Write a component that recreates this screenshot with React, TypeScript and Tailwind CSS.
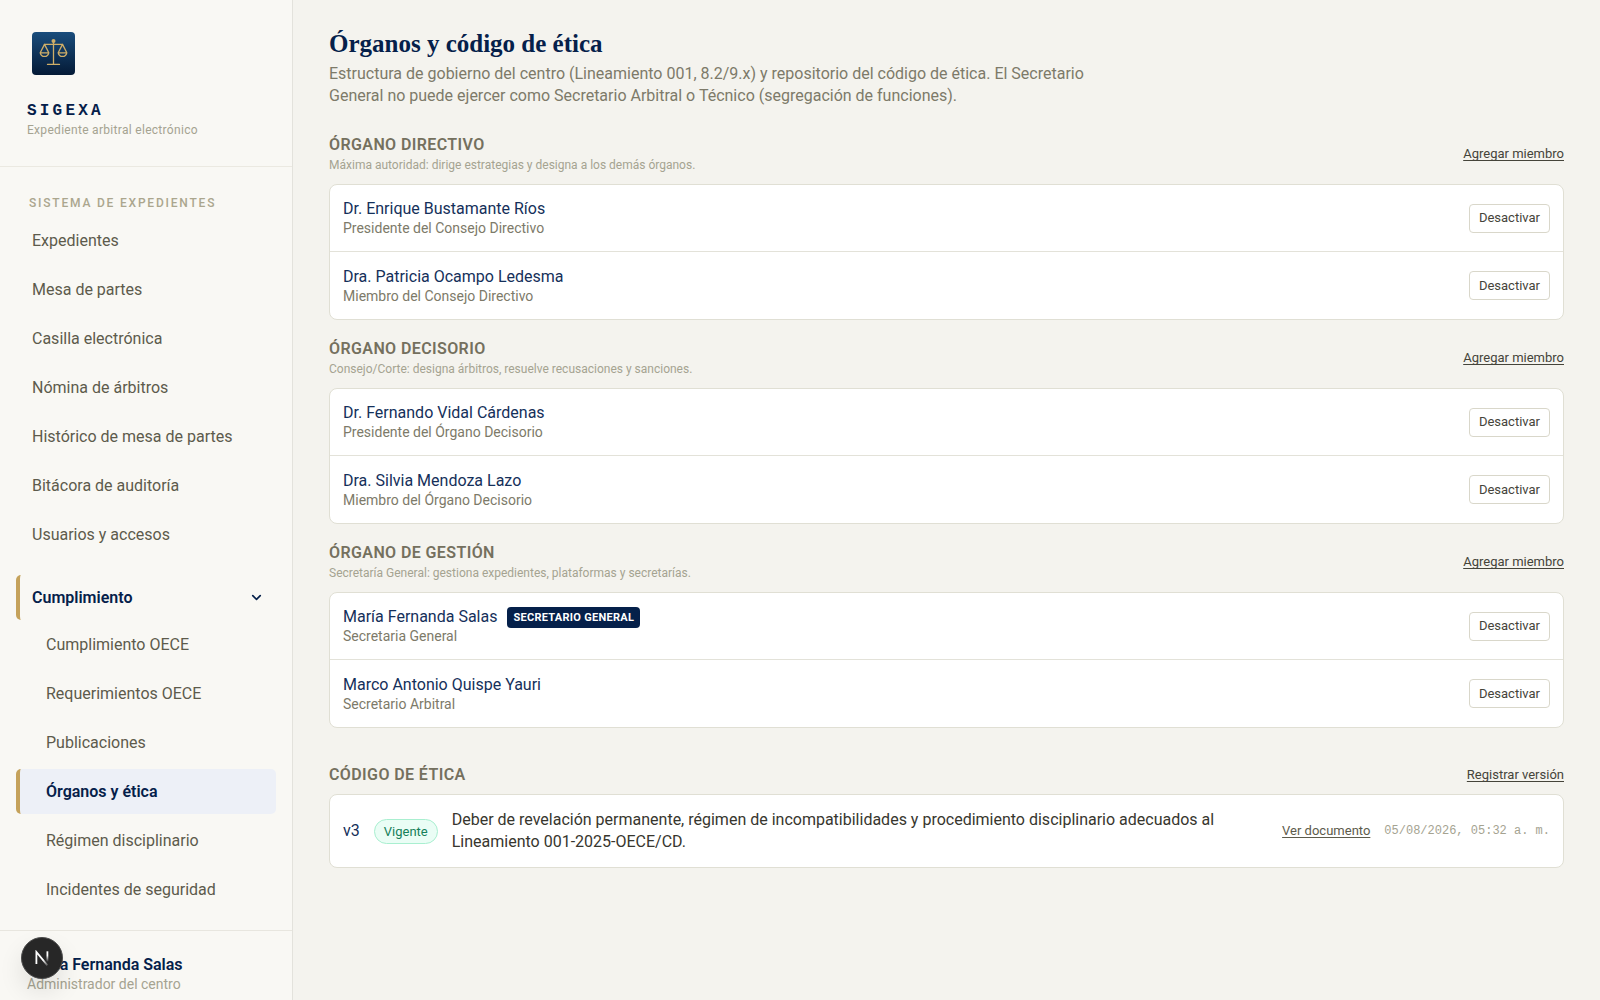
import { ChevronDown } from "lucide-react";

type Member = { name: string; role: string; badge?: string };
type Organ = { title: string; note: string; members: Member[] };

const navItems = [
  "Expedientes",
  "Mesa de partes",
  "Casilla electrónica",
  "Nómina de árbitros",
  "Histórico de mesa de partes",
  "Bitácora de auditoría",
  "Usuarios y accesos",
];

const complianceItems = [
  "Cumplimiento OECE",
  "Requerimientos OECE",
  "Publicaciones",
  "Órganos y ética",
  "Régimen disciplinario",
  "Incidentes de seguridad",
];

const organs: Organ[] = [
  {
    title: "Órgano Directivo",
    note: "Máxima autoridad: dirige estrategias y designa a los demás órganos.",
    members: [
      { name: "Dr. Enrique Bustamante Ríos", role: "Presidente del Consejo Directivo" },
      { name: "Dra. Patricia Ocampo Ledesma", role: "Miembro del Consejo Directivo" },
    ],
  },
  {
    title: "Órgano Decisorio",
    note: "Consejo/Corte: designa árbitros, resuelve recusaciones y sanciones.",
    members: [
      { name: "Dr. Fernando Vidal Cárdenas", role: "Presidente del Órgano Decisorio" },
      { name: "Dra. Silvia Mendoza Lazo", role: "Miembro del Órgano Decisorio" },
    ],
  },
  {
    title: "Órgano de Gestión",
    note: "Secretaría General: gestiona expedientes, plataformas y secretarías.",
    members: [
      { name: "María Fernanda Salas", role: "Secretaria General", badge: "Secretario General" },
      { name: "Marco Antonio Quispe Yauri", role: "Secretario Arbitral" },
    ],
  },
];

function Logo() {
  return (
    <svg viewBox="0 0 43 43" className="ml-[5px] size-[43px]" role="img" aria-label="SIGEXA">
      <defs>
        <linearGradient id="logo-bg" x1="0" y1="0" x2="0" y2="1">
          <stop offset="0" stopColor="#1a4d7c" />
          <stop offset="1" stopColor="#041a36" />
        </linearGradient>
      </defs>
      <rect width="43" height="43" rx="4" fill="url(#logo-bg)" />
      <g fill="none" stroke="#cfae68" strokeWidth="1.3" strokeLinecap="round" strokeLinejoin="round">
        <path d="M21.5 10v22M15.5 32.4h12M12.5 12.4h18" />
        <path d="M12.5 12.4 8.2 20.8h8.6zM8.2 20.8a4.4 4.6 0 0 0 8.6 0" />
        <path d="M30.5 12.4l-4.3 8.4h8.6zM26.2 20.8a4.4 4.6 0 0 0 8.6 0" />
      </g>
      <circle cx="21.5" cy="9" r="2" fill="#cfae68" />
    </svg>
  );
}

function Sidebar() {
  const item = "flex h-[45px] items-center rounded-[5px] border-l-4 text-[16px]";
  return (
    <aside className="sticky top-0 flex h-screen w-[293px] shrink-0 flex-col overflow-hidden border-r border-[#e3e2dc] bg-[#f9f8f4]">
      <header className="border-b border-[#ebe9e1] px-[27px] pt-8 pb-[26px]">
        <Logo />
        <p className="mt-[26px] font-['Liberation_Mono',monospace] text-[16px] leading-5 font-bold tracking-[0.2em] text-[#05204a]">SIGEXA</p>
        <p className="text-[12px] leading-[19px] tracking-wide text-[#a5a391]">Expediente arbitral electrónico</p>
      </header>
      <nav className="px-4 pt-[26px]">
        <h2 className="pl-[13px] text-[12px] leading-5 font-medium tracking-[0.15em] text-[#aba68e] uppercase">Sistema de expedientes</h2>
        <ul className="mt-[5px] flex flex-col gap-1">
          {navItems.map((label) => (
            <li key={label}>
              <a href="#" className={`${item} border-transparent pl-3 text-[#5d5b4c]`}>{label}</a>
            </li>
          ))}
        </ul>
        <button type="button" aria-expanded="true" className={`${item} mt-[18px] w-full justify-between border-[#c5a25b] pr-3 pl-3 font-semibold text-[#05204a]`}>
          Cumplimiento
          <ChevronDown size={15} strokeWidth={2.6} />
        </button>
        <ul className="mt-[2px] flex flex-col gap-1">
          {complianceItems.map((label) => (
            <li key={label}>
              <a
                href="#"
                aria-current={label === "Órganos y ética" ? "page" : undefined}
                className={`${item} pl-[26px] ${label === "Órganos y ética" ? "border-[#c5a25b] bg-[#edf0f7] font-semibold text-[#05204a]" : "border-transparent text-[#5d5b4c]"}`}
              >
                {label}
              </a>
            </li>
          ))}
        </ul>
      </nav>
      <footer className="mt-[18px] shrink-0 border-t border-[#e8e6df] px-[27px] pt-6">
        <p className="text-[16px] leading-5 font-semibold text-[#05204a]">María Fernanda Salas</p>
        <p className="text-[14px] leading-[18px] text-[#a5a391]">Administrador del centro</p>
      </footer>
    </aside>
  );
}

function OrganSection({ organ }: { organ: Organ }) {
  return (
    <section>
      <div className="mb-2.5 flex items-center justify-between">
        <div>
          <h2 className="text-[16px] leading-[22px] font-semibold tracking-wide text-[#74705e] uppercase">{organ.title}</h2>
          <p className="text-[12px] leading-[18px] text-[#a5a391]">{organ.note}</p>
        </div>
        <button type="button" className="text-[13px] text-[#45443a] underline underline-offset-2">Agregar miembro</button>
      </div>
      <ul className="divide-y divide-[#e3e2d9] rounded-lg border border-[#e0dfd4] bg-white">
        {organ.members.map((m) => (
          <li key={m.name} className="flex min-h-[67px] items-center justify-between px-[13px]">
            <div>
              <div className="flex h-5 items-center gap-2.5 text-[16px] leading-5 text-[#15305a]">
                {m.name}
                {m.badge && (
                  <span className="rounded-[4px] bg-[#05204a] px-1.5 text-[11px] leading-[21px] font-bold tracking-wide text-white uppercase">{m.badge}</span>
                )}
              </div>
              <p className="text-[14px] leading-[18px] text-[#7d7a69]">{m.role}</p>
            </div>
            <button type="button" className="h-[29px] rounded-[4px] border border-[#d9d7ca] px-[9px] text-[13px] text-[#45443a]">Desactivar</button>
          </li>
        ))}
      </ul>
    </section>
  );
}

export default function App() {
  return (
    <div className="flex min-h-screen bg-[#f4f3ee] font-['Roboto','Noto_Sans',sans-serif]">
      <Sidebar />
      <main className="min-w-0 flex-1 px-9 pt-[26px] pb-9">
        <h1 className="font-['Liberation_Serif',serif] text-[25px] leading-[35px] font-bold text-[#05204a]">Órganos y código de ética</h1>
        <p className="mt-0.5 max-w-[784px] text-[16px] leading-[22px] text-[#7d7a69]">
          Estructura de gobierno del centro (Lineamiento 001, 8.2/9.x) y repositorio del código de ética. El Secretario General no puede ejercer como Secretario Arbitral o Técnico (segregación de funciones).
        </p>
        <div className="mt-[27px] flex flex-col gap-[18px]">
          {organs.map((organ) => (
            <OrganSection key={organ.title} organ={organ} />
          ))}
        </div>
        <section className="mt-9">
          <div className="mb-2 flex items-center justify-between">
            <h2 className="text-[16px] leading-[22px] font-semibold tracking-wide text-[#74705e] uppercase">Código de ética</h2>
            <button type="button" className="text-[13px] text-[#45443a] underline underline-offset-2">Registrar versión</button>
          </div>
          <article className="flex items-center gap-3.5 rounded-lg border border-[#e0dfd4] bg-white px-[13px] py-3.5">
            <span className="text-[16px] text-[#15305a]">v3</span>
            <span className="rounded-full border border-[#a9efd0] bg-[#eafdf5] px-[9px] text-[13px] leading-[23px] text-[#16805a]">Vigente</span>
            <p className="flex-1 text-[16px] leading-[22px] text-[#37362e]">
              Deber de revelación permanente, régimen de incompatibilidades y procedimiento disciplinario adecuados al Lineamiento 001-2025-OECE/CD.
            </p>
            <a href="#" className="text-[13px] text-[#5d5b4c] underline underline-offset-2">Ver documento</a>
            <time className="font-['Liberation_Mono',monospace] text-[12px] text-[#a5a391]">05/08/2026, 05:32 a. m.</time>
          </article>
        </section>
      </main>
      <button type="button" aria-label="Next.js" className="fixed bottom-[21px] left-[21px] grid size-[42px] place-items-center rounded-full border border-[#4a4a4a] bg-[#272727] shadow-[0_12px_24px_rgba(0,0,0,0.10)]">
        <svg viewBox="0 0 16 16" className="size-4" fill="none" strokeWidth="1.8" aria-hidden="true">
          <defs>
            <linearGradient id="mark-a" x1="0" y1="0" x2="1" y2="1">
              <stop offset="0.6" stopColor="#fff" />
              <stop offset="1" stopColor="#fff" stopOpacity="0.2" />
            </linearGradient>
            <linearGradient id="mark-b" gradientUnits="userSpaceOnUse" x1="0" y1="1" x2="0" y2="12">
              <stop offset="0.4" stopColor="#fff" />
              <stop offset="1" stopColor="#fff" stopOpacity="0" />
            </linearGradient>
          </defs>
          <path d="M2.4 14V2l11 13.4" stroke="url(#mark-a)" />
          <path d="M13.4 1.3v10.5" stroke="url(#mark-b)" />
        </svg>
      </button>
    </div>
  );
}
